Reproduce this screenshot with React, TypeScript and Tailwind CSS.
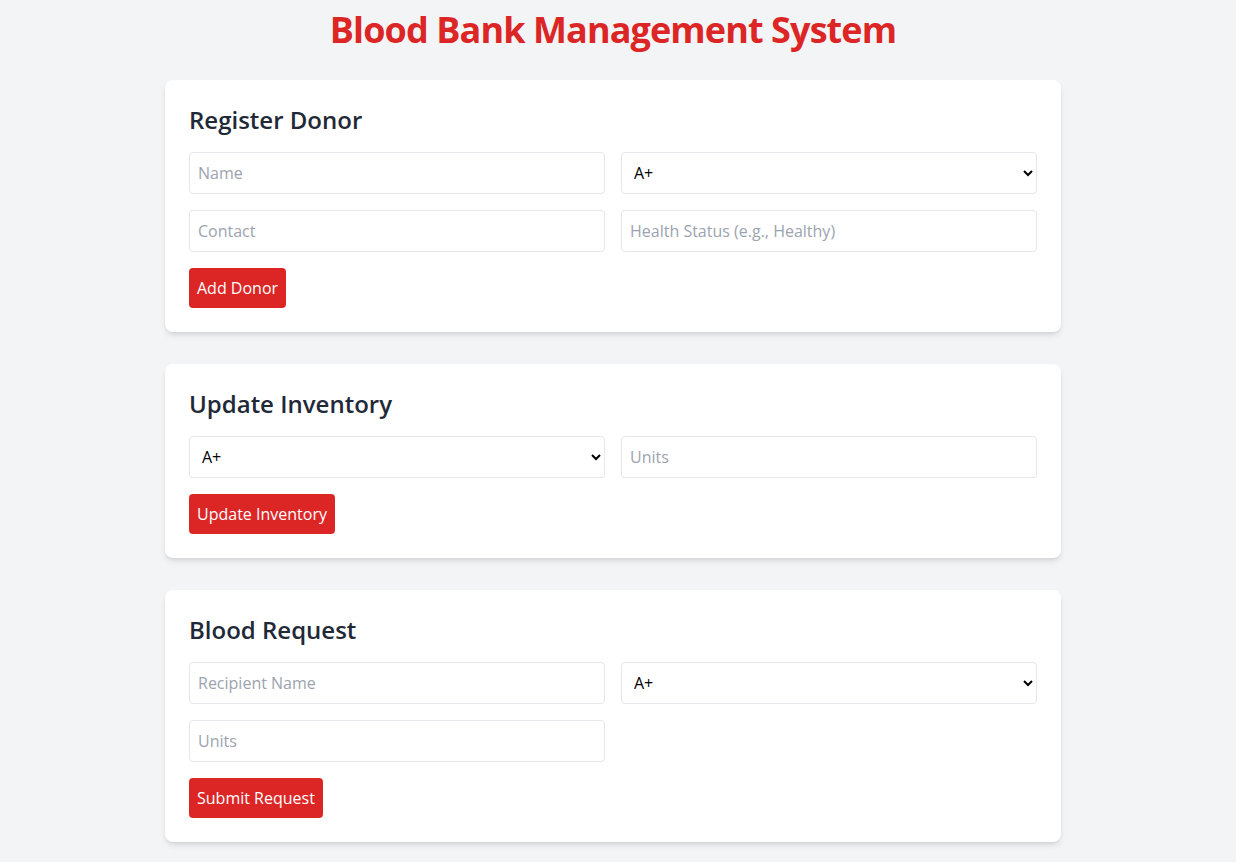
const bloodGroups = ["A+", "A-", "B+", "B-", "AB+", "AB-", "O+", "O-"];

const inputClass =
  "w-full p-2 text-base leading-6 border border-[#e5e7eb] rounded bg-white text-black placeholder:text-[#9ca3af] outline-none";

const BloodSelect = () => (
  <select className={inputClass} defaultValue="A+">
    {bloodGroups.map((g) => (
      <option key={g} value={g}>
        {g}
      </option>
    ))}
  </select>
);

const Card = ({ title, children }: { title: string; children: React.ReactNode }) => (
  <div className="bg-white rounded-lg shadow-md p-6 mb-8">
    <h2 className="text-2xl font-semibold text-[#1f2937] mb-4">{title}</h2>
    {children}
  </div>
);

const Button = ({ label }: { label: string }) => (
  <button className="mt-4 bg-[#dc2626] hover:bg-[#b91c1c] text-white px-2 py-2 leading-6 rounded">
    {label}
  </button>
);

export default function App() {
  return (
    <div
      className="min-h-screen bg-[#f3f4f6] pt-[10px] pb-4 pr-[10px]"
      style={{ fontFamily: '"Segoe UI", "Open Sans", sans-serif' }}
    >
      <h1 className="text-4xl font-bold tracking-tight text-[#dc2626] text-center mb-[30px]">
        Blood Bank Management System
      </h1>
      <div className="max-w-4xl mx-auto">
        <Card title="Register Donor">
          <div className="grid grid-cols-2 gap-4">
            <input className={inputClass} placeholder="Name" />
            <BloodSelect />
            <input className={inputClass} placeholder="Contact" />
            <input className={inputClass} placeholder="Health Status (e.g., Healthy)" />
          </div>
          <Button label="Add Donor" />
        </Card>

        <Card title="Update Inventory">
          <div className="grid grid-cols-2 gap-4">
            <BloodSelect />
            <input className={inputClass} placeholder="Units" type="number" />
          </div>
          <Button label="Update Inventory" />
        </Card>

        <Card title="Blood Request">
          <div className="grid grid-cols-2 gap-4">
            <input className={inputClass} placeholder="Recipient Name" />
            <BloodSelect />
            <input className={inputClass} placeholder="Units" type="number" />
          </div>
          <Button label="Submit Request" />
        </Card>
      </div>
    </div>
  );
}
